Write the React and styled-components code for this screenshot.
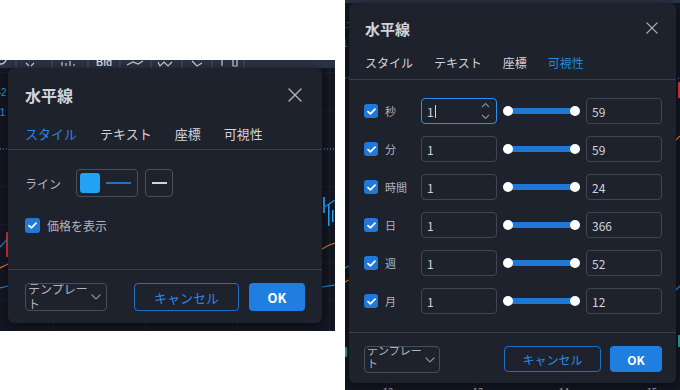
import React from "react";
import styled, { createGlobalStyle } from "styled-components";

const GlobalStyle = createGlobalStyle`
  html, body {
    margin: 0;
    padding: 0;
    background: #ffffff;
  }
  body {
    font-family: "Noto Sans CJK JP", "Noto Sans", sans-serif;
  }
  * {
    box-sizing: border-box;
  }
`;

const Page = styled.div`
  display: flex;
  align-items: flex-start;
  gap: 10px;
  width: 680px;
  height: 390px;
  overflow: hidden;
`;

// one chart screenshot, the dialog sits on top of it
const Shot = styled.div`
  position: relative;
  flex: none;
  display: flex;
  width: 335px;
  height: ${(p) => p.$h}px;
  margin-top: ${(p) => p.$top}px;
  padding: ${(p) => p.$pad};
  background-color: #131722;
  background-image: linear-gradient(to right, #1d2130 1px, transparent 1px),
    linear-gradient(to bottom, #1a1e2b 1px, transparent 1px);
  background-size: ${(p) => p.$grid}px 100%, 100% 38px;
  background-position: ${(p) => p.$gx}px 0, 0 12px;
  overflow: hidden;
`;

const Backdrop = styled.svg`
  position: absolute;
  inset: 0;
  width: 100%;
  height: 100%;
`;

const Dialog = styled.div`
  position: relative;
  flex: 1;
  display: flex;
  flex-direction: column;
  background: #1e222d;
  border-radius: 6px;
  box-shadow: 0 2px 12px rgba(0, 0, 0, 0.55);
  color: #d1d4dc;
`;

const Header = styled.div`
  flex: none;
  display: flex;
  align-items: center;
  justify-content: space-between;
  height: ${(p) => p.$h}px;
  padding: 0 ${(p) => p.$pr}px 0 ${(p) => p.$pl}px;
`;

const Title = styled.div`
  font-size: ${(p) => p.$fs}px;
  font-weight: 600;
  color: #d1d4dc;
`;

const CloseIcon = styled.svg`
  display: block;
  width: ${(p) => p.$size}px;
  height: ${(p) => p.$size}px;
`;

const Tabs = styled.div`
  flex: none;
  display: flex;
  align-items: center;
  gap: ${(p) => p.$gap}px;
  height: ${(p) => p.$h}px;
  padding: 0 0 ${(p) => p.$pb}px ${(p) => p.$pl}px;
`;

const Tab = styled.div`
  font-size: ${(p) => p.$fs}px;
  line-height: 1;
  color: ${(p) => (p.$active ? "#2b86df" : "#d1d4dc")};
`;

const Divider = styled.div`
  flex: none;
  height: 1px;
  margin-top: ${(p) => p.$mt || 0}px;
  background: #3a3e4a;
`;

const StyleBody = styled.div`
  flex: 1;
  display: flex;
  flex-direction: column;
  gap: 20px;
  padding: 19px 17px 0;
`;

const LineRow = styled.div`
  display: flex;
  align-items: center;
  height: 28px;
`;

const FieldLabel = styled.div`
  width: ${(p) => p.$w}px;
  flex: none;
  font-size: ${(p) => p.$fs}px;
  color: #b2b5be;
`;

const SwatchButton = styled.div`
  display: flex;
  align-items: center;
  gap: 6px;
  height: 28px;
  width: ${(p) => p.$w}px;
  padding: 0 3px;
  margin-right: 7px;
  border: 1px solid #4a4e5a;
  border-radius: 4px;
  justify-content: ${(p) => (p.$center ? "center" : "flex-start")};
`;

const ColorChip = styled.div`
  width: 20px;
  height: 20px;
  border-radius: 3px;
  background: #22a1f5;
`;

const Stroke = styled.div`
  width: ${(p) => p.$w}px;
  height: ${(p) => p.$t}px;
  background: ${(p) => p.$c};
`;

const CheckRow = styled.div`
  display: flex;
  align-items: center;
  gap: 7px;
  font-size: 12px;
  color: #b2b5be;
`;

const Box = styled.div`
  flex: none;
  display: flex;
  align-items: center;
  justify-content: center;
  width: ${(p) => p.$size}px;
  height: ${(p) => p.$size}px;
  border-radius: 3px;
  background: #2078d8;
`;

const Footer = styled.div`
  flex: none;
  display: flex;
  align-items: flex-start;
  gap: ${(p) => p.$gap}px;
  padding: 13px ${(p) => p.$pr}px ${(p) => p.$pb}px ${(p) => p.$pl}px;
`;

const TemplateSelect = styled.div`
  display: flex;
  align-items: center;
  width: ${(p) => p.$w}px;
  height: ${(p) => p.$h}px;
  margin-right: auto;
  padding-left: 2px;
  border: 1px solid #4a4e5a;
  border-radius: 4px;
  overflow: hidden;
`;

const TemplateText = styled.div`
  align-self: flex-start;
  width: ${(p) => p.$w}px;
  margin-top: -3px;
  font-size: ${(p) => p.$fs}px;
  line-height: ${(p) => p.$lh}px;
  color: #b2b5be;
`;

const Chevron = styled.svg`
  flex: none;
  margin-left: auto;
  margin-right: ${(p) => p.$mr}px;
`;

const CancelButton = styled.div`
  display: flex;
  align-items: center;
  justify-content: center;
  width: ${(p) => p.$w}px;
  height: ${(p) => p.$h}px;
  border: 1px solid #1f6fc4;
  border-radius: 4px;
  font-size: ${(p) => p.$fs}px;
  color: #2f89e3;
`;

const OkButton = styled.div`
  display: flex;
  align-items: center;
  justify-content: center;
  width: ${(p) => p.$w}px;
  height: ${(p) => p.$h}px;
  border-radius: 4px;
  background: #1f7ee0;
  font-size: ${(p) => p.$fs}px;
  font-weight: 600;
  color: #ffffff;
`;

const VisBody = styled.div`
  flex: 1;
  display: flex;
  flex-direction: column;
  gap: 12px;
  padding: 18px 14px 0 15px;
`;

const VisRow = styled.div`
  display: flex;
  align-items: center;
  height: 26px;
`;

const VisLabel = styled.div`
  width: 43px;
  padding-left: 7px;
  font-size: 11px;
  color: #b2b5be;
`;

const NumField = styled.div`
  display: flex;
  align-items: center;
  width: 76px;
  height: 26px;
  padding: 0 6px 0 5px;
  border: 1px solid ${(p) => (p.$focus ? "#2a8ef0" : "#434651")};
  border-radius: 4px;
  font-size: 12px;
  color: #d1d4dc;
`;

const Caret = styled.span`
  display: inline-block;
  width: 1px;
  height: 13px;
  margin-left: 1px;
  background: #d1d4dc;
`;

const Spinner = styled.svg`
  margin-left: auto;
`;

const Slider = styled.div`
  display: flex;
  align-items: center;
  width: 77px;
  height: 26px;
  margin: 0 6px;
  padding: 0 5px;
`;

const SliderTrack = styled.div`
  position: relative;
  flex: 1;
  height: 6px;
  background: #1f78d6;
  border-radius: 1px;
`;

const Knob = styled.div`
  position: absolute;
  top: -2px;
  ${(p) => (p.$end ? "right: -5px;" : "left: -5px;")}
  width: 10px;
  height: 10px;
  border-radius: 50%;
  background: #ffffff;
`;

function Check({ size }) {
  return (
    <Box $size={size}>
      <svg width="9" height="7" viewBox="0 0 9 7">
        <polyline points="1,3.6 3.4,5.8 8,1.2" fill="none" stroke="#fff" strokeWidth="1.7" strokeLinecap="round" strokeLinejoin="round" />
      </svg>
    </Box>
  );
}

function Close({ size }) {
  return (
    <CloseIcon $size={size} viewBox="0 0 14 14">
      <path d="M1 1 L13 13 M13 1 L1 13" stroke="#b2b5be" strokeWidth="1.4" strokeLinecap="round" />
    </CloseIcon>
  );
}

function DownChevron({ mr }) {
  return (
    <Chevron $mr={mr} width="10" height="6" viewBox="0 0 10 6">
      <polyline points="1,1 5,5 9,1" fill="none" stroke="#8a8d96" strokeWidth="1.2" strokeLinecap="round" />
    </Chevron>
  );
}

function LeftChart() {
  return (
    <Backdrop viewBox="0 0 335 271">
      <rect x="0" y="0" width="335" height="8" fill="#2a3446" />
      <path d="M0 4 A6 6 0 0 0 6 0" stroke="#c9ccd4" strokeWidth="1.3" fill="none" />
      <g stroke="#4a5566" strokeWidth="1">
        <line x1="16" y1="0" x2="16" y2="8" />
        <line x1="52" y1="0" x2="52" y2="8" />
        <line x1="88" y1="0" x2="88" y2="8" />
        <line x1="120" y1="0" x2="120" y2="8" />
        <line x1="151" y1="0" x2="151" y2="8" />
        <line x1="182" y1="0" x2="182" y2="8" />
        <line x1="212" y1="0" x2="212" y2="8" />
        <line x1="244" y1="0" x2="244" y2="8" />
      </g>
      <g stroke="#d1d4dc" strokeWidth="1.2" fill="none">
        <path d="M26 3 L29 6 M34 3 L31 6" />
        <path d="M62 6 L62 2 M66 6 L66 3 M70 6 L70 1 M74 6 L74 4" />
        <path d="M127 5 L133 2 L138 4 L143 1" />
        <path d="M158 2 L160 6 L164 2 L168 6 L172 2" />
        <path d="M192 1 L197 6 L202 3" />
        <path d="M222 0 L222 6 M233 0 L233 6 L237 6 L237 0" />
      </g>
      <text x="96" y="6" fontSize="10" fontWeight="700" fill="#d1d4dc" fontFamily="Liberation Sans, sans-serif">Bid</text>
      <text x="-10" y="36" fontSize="10" fill="#2196f3" fontFamily="Liberation Sans, sans-serif">142</text>
      <text x="-10" y="56" fontSize="10" fill="#2196f3" fontFamily="Liberation Sans, sans-serif">111</text>
      <line x1="0" y1="89" x2="335" y2="89" stroke="#2aa7f0" strokeWidth="1" strokeDasharray="1 2" />
      <rect x="6" y="172" width="2" height="25" fill="#e53945" />
      <path d="M0 187 Q4 183 8 178" stroke="#2196f3" strokeWidth="1.2" fill="none" />
      <path d="M0 208 Q4 206 8 204" stroke="#ef7d22" strokeWidth="1.2" fill="none" />
      <path d="M0 228 L8 226" stroke="#2196f3" strokeWidth="1.2" fill="none" />
      <rect x="323" y="137" width="2" height="16" fill="#29a4f5" />
      <rect x="328" y="144" width="1.5" height="22" fill="#29a4f5" />
      <rect x="332" y="150" width="1.5" height="12" fill="#29a4f5" />
      <path d="M323 148 L335 140" stroke="#2196f3" strokeWidth="1.2" fill="none" />
      <path d="M322 189 Q328 185 335 183" stroke="#ef7d22" strokeWidth="1.2" fill="none" />
      <path d="M322 227 L335 225" stroke="#2196f3" strokeWidth="1.2" fill="none" />
    </Backdrop>
  );
}

function RightChart() {
  return (
    <Backdrop viewBox="0 0 335 390">
      <rect x="0" y="0" width="335" height="3" fill="#2a3446" />
      <text x="-4" y="28" fontSize="10" fill="#2196f3" fontFamily="Liberation Sans, sans-serif">1:</text>
      <text x="-3" y="47" fontSize="10" fill="#2196f3" fontFamily="Liberation Sans, sans-serif">1</text>
      <line x1="0" y1="78" x2="335" y2="78" stroke="#2aa7f0" strokeWidth="1" strokeDasharray="1 2" />
      <rect x="333" y="82" width="2" height="16" fill="#e53945" />
      <path d="M331 140 L335 136" stroke="#ef7d22" strokeWidth="1.2" fill="none" />
      <path d="M0 268 L4 266" stroke="#2196f3" strokeWidth="1.2" fill="none" />
      <path d="M0 282 L4 280" stroke="#ef7d22" strokeWidth="1.2" fill="none" />
      <rect x="0" y="347" width="2" height="10" fill="#26a69a" />
      <path d="M331 290 L335 286" stroke="#2196f3" strokeWidth="1.2" fill="none" />
      <rect x="333" y="335" width="2" height="12" fill="#26a69a" />
      <g fill="#b2b5be" fontSize="9" fontFamily="Liberation Sans, sans-serif">
        <text x="38" y="394">12</text>
        <text x="128" y="394">13</text>
        <text x="214" y="394">14</text>
        <text x="302" y="394">15</text>
      </g>
    </Backdrop>
  );
}

const visRows = [
  { label: "秒", max: "59", focus: true },
  { label: "分", max: "59" },
  { label: "時間", max: "24" },
  { label: "日", max: "366" },
  { label: "週", max: "52" },
  { label: "月", max: "12" },
];

function StyleDialog() {
  return (
    <Dialog>
      <Header $h={54} $pl={17} $pr={20}>
        <Title $fs={16}>水平線</Title>
        <Close size={14} />
      </Header>
      <Tabs $h={27} $pb={5} $pl={17} $gap={23}>
        <Tab $fs={13} $active>スタイル</Tab>
        <Tab $fs={13}>テキスト</Tab>
        <Tab $fs={13}>座標</Tab>
        <Tab $fs={13}>可視性</Tab>
      </Tabs>
      <Divider />
      <StyleBody>
        <LineRow>
          <FieldLabel $w={51} $fs={12}>ライン</FieldLabel>
          <SwatchButton $w={62}>
            <ColorChip />
            <Stroke $w={25} $t={2} $c="#2d72b8" />
          </SwatchButton>
          <SwatchButton $w={28} $center>
            <Stroke $w={15} $t={2} $c="#d1d4dc" />
          </SwatchButton>
        </LineRow>
        <CheckRow>
          <Check size={15} />
          価格を表示
        </CheckRow>
      </StyleBody>
      <Divider />
      <Footer $gap={10} $pl={17} $pr={17} $pb={12}>
        <TemplateSelect $w={82} $h={28}>
          <TemplateText $w={62} $fs={12} $lh={15}>テンプレート</TemplateText>
          <DownChevron mr={5} />
        </TemplateSelect>
        <CancelButton $w={105} $h={28} $fs={13}>キャンセル</CancelButton>
        <OkButton $w={56} $h={28} $fs={13}>OK</OkButton>
      </Footer>
    </Dialog>
  );
}

function VisibilityDialog() {
  return (
    <Dialog>
      <Header $h={50} $pl={16} $pr={18}>
        <Title $fs={15}>水平線</Title>
        <Close size={12} />
      </Header>
      <Tabs $h={26} $pb={6} $pl={16} $gap={21}>
        <Tab $fs={12}>スタイル</Tab>
        <Tab $fs={12}>テキスト</Tab>
        <Tab $fs={12}>座標</Tab>
        <Tab $fs={12} $active>可視性</Tab>
      </Tabs>
      <Divider />
      <VisBody>
        {visRows.map((r) => (
          <VisRow key={r.label}>
            <Check size={14} />
            <VisLabel>{r.label}</VisLabel>
            <NumField $focus={r.focus}>
              1
              {r.focus && <Caret />}
              {r.focus && (
                <Spinner width="9" height="18" viewBox="0 0 9 18">
                  <polyline points="1,5 4.5,1.5 8,5" fill="none" stroke="#8a8d96" strokeWidth="1.1" />
                  <polyline points="1,13 4.5,16.5 8,13" fill="none" stroke="#8a8d96" strokeWidth="1.1" />
                </Spinner>
              )}
            </NumField>
            <Slider>
              <SliderTrack>
                <Knob />
                <Knob $end />
              </SliderTrack>
            </Slider>
            <NumField>{r.max}</NumField>
          </VisRow>
        ))}
      </VisBody>
      <Divider $mt={18} />
      <Footer $gap={9} $pl={15} $pr={14} $pb={10}>
        <TemplateSelect $w={76} $h={27}>
          <TemplateText $w={57} $fs={11} $lh={13}>テンプレート</TemplateText>
          <DownChevron mr={4} />
        </TemplateSelect>
        <CancelButton $w={97} $h={26} $fs={12}>キャンセル</CancelButton>
        <OkButton $w={52} $h={26} $fs={12}>OK</OkButton>
      </Footer>
    </Dialog>
  );
}

export default function App() {
  return (
    <>
      <GlobalStyle />
      <Page>
        <Shot $h={271} $top={60} $pad="8px 13px 8px 8px" $grid={92} $gx={53}>
          <LeftChart />
          <StyleDialog />
        </Shot>
        <Shot $h={390} $top={0} $pad="3px 4px 7px 4px" $grid={88} $gx={41}>
          <RightChart />
          <VisibilityDialog />
        </Shot>
      </Page>
    </>
  );
}
